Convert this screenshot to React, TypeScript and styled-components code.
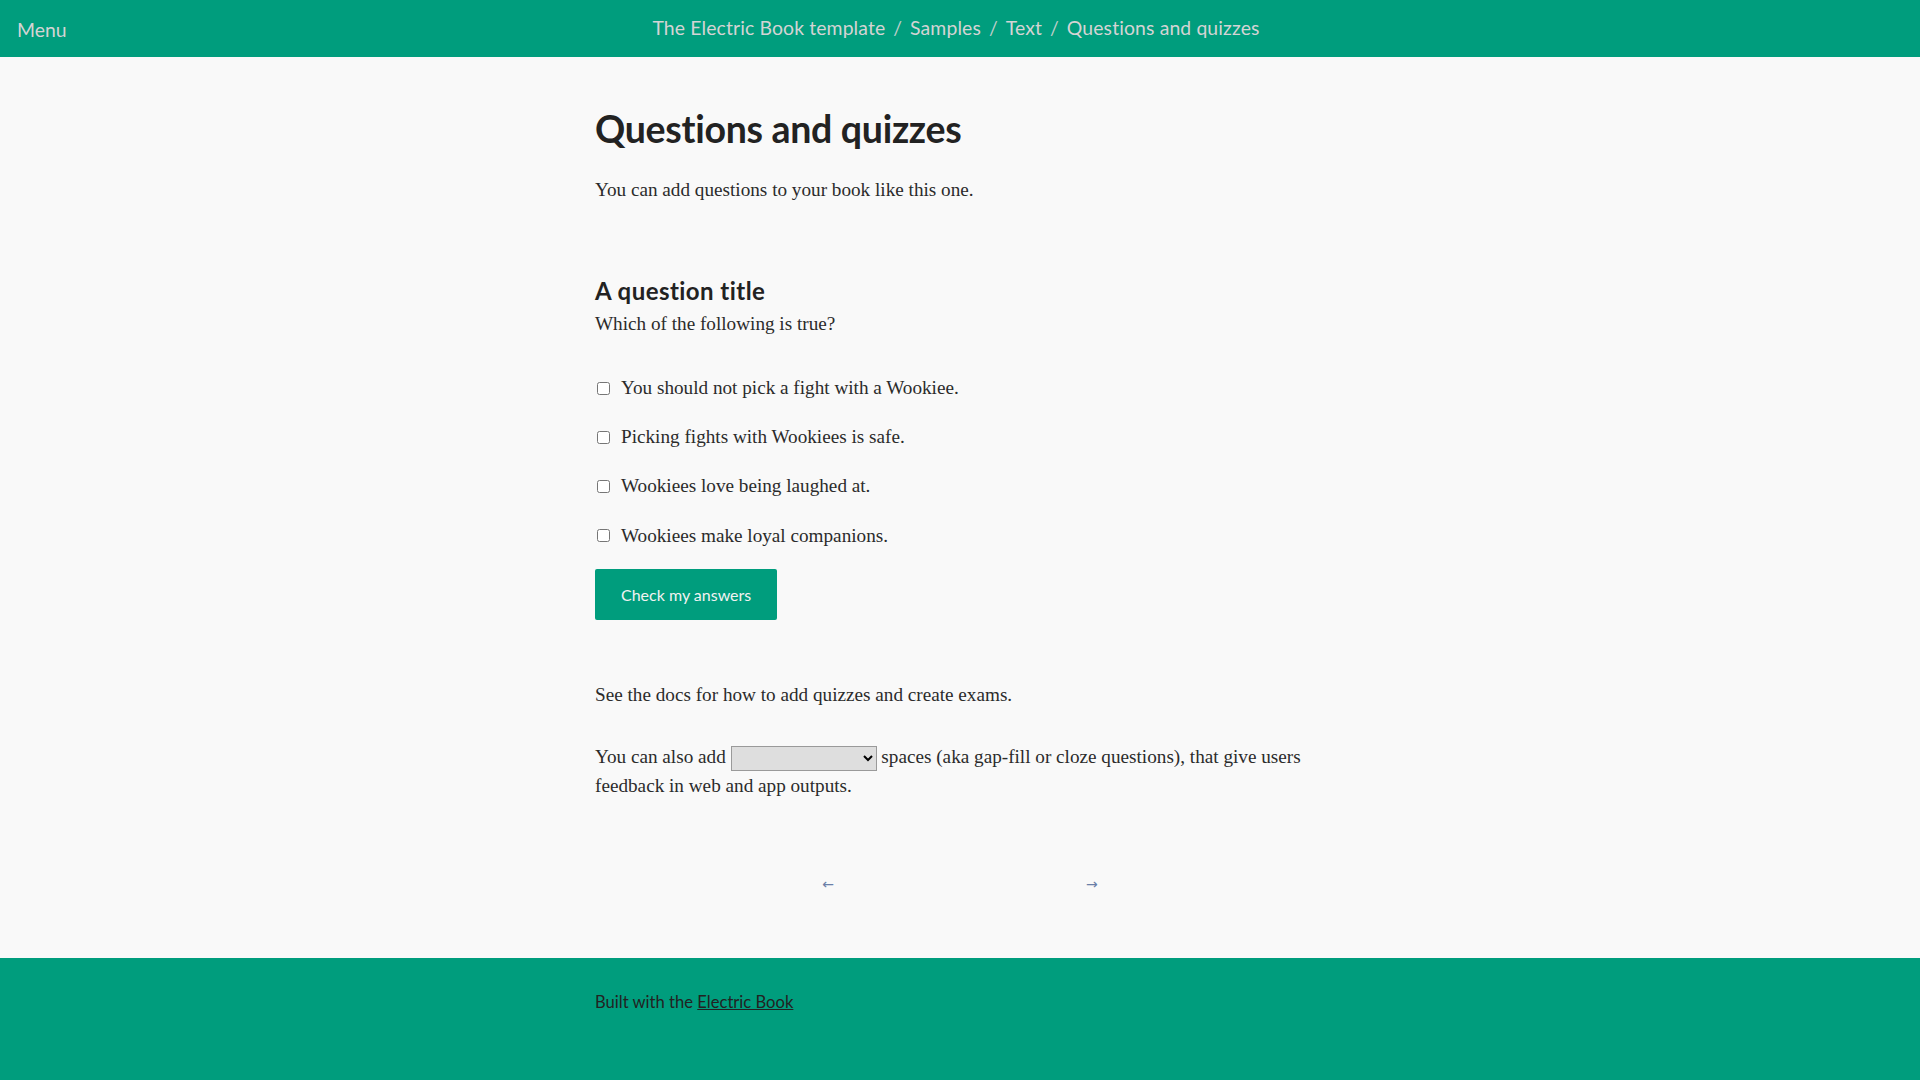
import React from "react";
import styled, { createGlobalStyle } from "styled-components";

const GlobalStyle = createGlobalStyle`
  html, body { margin: 0; padding: 0; }
  body {
    background: #f9f9f9;
    color: #2b2b2b;
    font-family: "Liberation Serif", "Times New Roman", serif;
  }
`;

const Page = styled.div`
  display: flex;
  flex-direction: column;
  min-height: 100vh;
`;

const Header = styled.header`
  height: 57px;
  background: #009d7d;
  display: grid;
  grid-template-columns: 1fr auto 1fr;
  align-items: center;
  padding: 0 17px;
  box-sizing: border-box;
  font-family: Lato, "Open Sans", sans-serif;
  font-size: 19.4px;
  color: #d4d4d4;
`;

const MenuButton = styled.span`
  justify-self: start;
  padding-top: 1px;
`;

const Breadcrumbs = styled.nav`
  display: flex;
  gap: 8px;
  padding-bottom: 3px;
  margin-right: 8px;
`;

const Crumb = styled.span`
  letter-spacing: 0.12px;
`;

const Sep = styled.span`
  opacity: 0.9;
`;

const Main = styled.main`
  width: 730px;
  margin: 0 auto;
  padding-top: 49px;
  flex: 1;
`;

const Title = styled.h1`
  font-family: Lato, "Open Sans", sans-serif;
  font-weight: 700;
  font-size: 37.5px;
  letter-spacing: -0.3px;
  line-height: 46px;
  color: #222;
  margin: 0 0 24px;
`;

const Para = styled.p<{ $mt?: number }>`
  font-size: 19.2px;
  line-height: 1.5;
  margin: ${(p) => p.$mt ?? 0}px 0 0;
`;

const Question = styled.section`
  margin-top: 72px;
`;

const QuestionTitle = styled.h2`
  font-family: Lato, "Open Sans", sans-serif;
  font-weight: 700;
  font-size: 24px;
  letter-spacing: 0.45px;
  line-height: 27.6px;
  color: #222;
  margin: 0 0 5.5px;
`;

const Options = styled.div`
  display: flex;
  flex-direction: column;
  gap: 20.5px;
  margin-top: 35px;
`;

const Option = styled.label`
  display: flex;
  align-items: center;
  font-size: 19.2px;
  line-height: 28.8px;
`;

const Check = styled.input`
  width: 13px;
  height: 13px;
  margin: 0 11px 0 2px;
`;

const CheckButton = styled.button`
  margin-top: 19px;
  height: 51px;
  padding: 0 26px;
  background: #009d7d;
  color: #f2f2f2;
  border: none;
  border-radius: 2px;
  font-family: Lato, "Open Sans", sans-serif;
  font-size: 16px;
  cursor: pointer;
`;

const GapSelect = styled.select`
  width: 146px;
  height: 25px;
  vertical-align: middle;
  background: #dedede;
  border: 1px solid #9a9a9a;
  border-radius: 0;
  margin: 0;
`;

const PageNav = styled.nav`
  display: flex;
  justify-content: center;
  gap: 252px;
  margin-top: 73px;
`;

const NavLink = styled.a`
  color: #6b80a8;
  text-decoration: none;
  font-family: "DejaVu Sans", sans-serif;
  font-size: 14px;
  line-height: 20px;
`;

const Footer = styled.footer`
  margin-top: 64px;
  height: 122px;
  box-sizing: border-box;
  background: #009d7d;
  padding-top: 32px;
`;

const FooterInner = styled.div`
  width: 730px;
  margin: 0 auto;
  font-family: Lato, "Open Sans", sans-serif;
  font-size: 16.6px;
  line-height: 1.5;
  color: #222;
`;

const FooterLink = styled.a`
  color: #222;
  text-decoration: underline;
`;

const options = [
  "You should not pick a fight with a Wookiee.",
  "Picking fights with Wookiees is safe.",
  "Wookiees love being laughed at.",
  "Wookiees make loyal companions.",
];

export default function App() {
  return (
    <Page>
      <GlobalStyle />
      <Header>
        <MenuButton>Menu</MenuButton>
        <Breadcrumbs>
          <Crumb>The Electric Book template</Crumb>
          <Sep>/</Sep>
          <Crumb>Samples</Crumb>
          <Sep>/</Sep>
          <Crumb>Text</Crumb>
          <Sep>/</Sep>
          <Crumb>Questions and quizzes</Crumb>
        </Breadcrumbs>
        <span />
      </Header>
      <Main>
        <Title>Questions and quizzes</Title>
        <Para>You can add questions to your book like this one.</Para>
        <Question>
          <QuestionTitle>A question title</QuestionTitle>
          <Para>Which of the following is true?</Para>
          <Options>
            {options.map((o) => (
              <Option key={o}>
                <Check type="checkbox" />
                {o}
              </Option>
            ))}
          </Options>
          <CheckButton>Check my answers</CheckButton>
        </Question>
        <Para $mt={61}>See the docs for how to add quizzes and create exams.</Para>
        <Para $mt={33}>
          You can also add{" "}
          <GapSelect defaultValue="" aria-label="gap">
            <option value=""></option>
          </GapSelect>{" "}
          spaces (aka gap-fill or cloze questions), that give users feedback in web and app outputs.
        </Para>
        <PageNav>
          <NavLink href="#">←</NavLink>
          <NavLink href="#">→</NavLink>
        </PageNav>
      </Main>
      <Footer>
        <FooterInner>
          Built with the <FooterLink href="#">Electric Book</FooterLink>
        </FooterInner>
      </Footer>
    </Page>
  );
}
